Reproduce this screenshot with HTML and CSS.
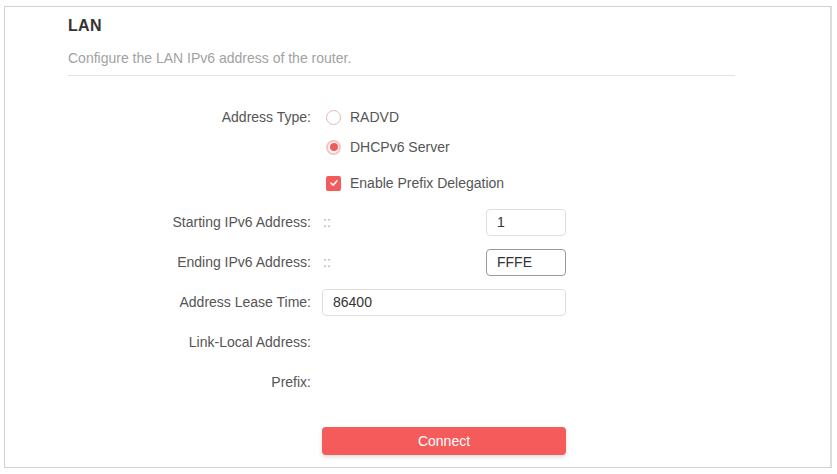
FILE: index.html
```html
<!DOCTYPE html>
<html lang="en">
<head>
    <meta charset="UTF-8">
    <meta name="viewport" content="width=device-width, initial-scale=1.0">
    <title>LAN</title>
    <link rel="stylesheet" href="styles.css">
</head>
<body>
    <div class="frame">
        <div class="header">
            <h2 class="title">LAN</h2>
            <p class="subtitle">Configure the LAN IPv6 address of the router.</p>
        </div>

        <div class="form">
            <div class="row row-top">
                <label class="label">Address Type:</label>
                <div class="options">
                    <div class="option"><span class="radio"></span>RADVD</div>
                    <div class="option"><span class="radio checked"></span>DHCPv6 Server</div>
                </div>
            </div>
            <div class="row row-check">
                <span class="label"></span>
                <div class="option">
                    <span class="checkbox">
                        <svg width="10" height="10" viewBox="0 0 10 10"><path d="M2 5.2 L4.2 7.2 L8 2.8" fill="none" stroke="#fff" stroke-width="1.6" stroke-linecap="round" stroke-linejoin="round"/></svg>
                    </span>Enable Prefix Delegation
                </div>
            </div>
            <div class="row">
                <label class="label">Starting IPv6 Address:</label>
                <div class="field split">
                    <span class="prefix">::</span>
                    <div class="input short">1</div>
                </div>
            </div>
            <div class="row">
                <label class="label">Ending IPv6 Address:</label>
                <div class="field split">
                    <span class="prefix">::</span>
                    <div class="input short active">FFFE</div>
                </div>
            </div>
            <div class="row">
                <label class="label">Address Lease Time:</label>
                <div class="field">
                    <div class="input">86400</div>
                </div>
            </div>
            <div class="row">
                <label class="label">Link-Local Address:</label>
                <div class="field"></div>
            </div>
            <div class="row">
                <label class="label">Prefix:</label>
                <div class="field"></div>
            </div>
            <div class="row row-button">
                <span class="label"></span>
                <button class="btn">Connect</button>
            </div>
            <div class="row row-next">
                <span class="label"></span>
                <div class="btn-next"></div>
            </div>
        </div>
    </div>
</body>
</html>
```

FILE: styles.css
```css
body {
    margin: 0;
    background-color: #fff;
    font-family: "Liberation Sans", Arial, sans-serif;
    font-size: 14px;
    color: #555;
}

.frame {
    margin: 6px 0 0 4px;
    width: 828px;
    height: 462px;
    box-sizing: border-box;
    border: 1px solid #d2d2d2;
    border-right-width: 2px;
    border-right-color: #dcdcdc;
}

.header {
    margin-left: 63px;
    width: 667px;
    padding-top: 10px;
    padding-bottom: 9px;
    border-bottom: 1px solid #e2e2e2;
}

.title {
    margin: 0;
    font-size: 16px;
    line-height: 18px;
    font-weight: bold;
    color: #333;
    letter-spacing: 0.3px;
}

.subtitle {
    margin: 15px 0 0;
    line-height: 16px;
    color: #a2a2a2;
}

.form {
    padding-top: 31px;
}

.row {
    display: flex;
    align-items: center;
    height: 28px;
    margin-top: 12px;
}

.row-top {
    margin-top: 0;
    height: auto;
    align-items: flex-start;
}

.row-check {
    height: 20px;
    margin-top: 16px;
}

.row-check + .row {
    margin-top: 15px;
}

.row-button {
    margin-top: 31px;
}

.row-next {
    margin-top: 14px;
}

.label {
    width: 306px;
    margin-right: 11px;
    text-align: right;
    line-height: 20px;
    white-space: nowrap;
}

.options {
    display: flex;
    flex-direction: column;
    gap: 10px;
}

.option {
    display: flex;
    align-items: center;
    height: 20px;
    padding-left: 4px;
    color: #555;
}

.radio {
    width: 15px;
    height: 15px;
    box-sizing: border-box;
    border: 1px solid #e2b9b9;
    border-radius: 50%;
    margin-right: 9px;
    position: relative;
}

.radio.checked {
    border: 2px solid #f8c2c2;
}

.radio.checked::after {
    content: "";
    position: absolute;
    left: 1.5px;
    top: 1.5px;
    width: 8px;
    height: 8px;
    border-radius: 50%;
    background-color: #f15b5b;
}

.checkbox {
    width: 15px;
    height: 15px;
    border-radius: 2px;
    background-color: #f25c5c;
    margin-right: 9px;
    display: flex;
    align-items: center;
    justify-content: center;
}

.checkbox svg {
    display: block;
}

.field {
    width: 244px;
    display: flex;
    align-items: center;
}

.split {
    justify-content: space-between;
}

.prefix {
    color: #aaa;
    padding-left: 1px;
}

.input {
    width: 100%;
    height: 27px;
    box-sizing: border-box;
    border: 1px solid #dedede;
    border-radius: 4px;
    padding-left: 10px;
    line-height: 25px;
    color: #333;
}

.input.short {
    width: 80px;
}

.input.active {
    border-color: #9a9a9a;
}

.btn {
    width: 244px;
    height: 28px;
    border: none;
    border-radius: 4px;
    background-color: #f65b5b;
    color: #fff;
    font-family: "Liberation Sans", Arial, sans-serif;
    font-size: 14px;
    box-shadow: 0 2px 4px rgba(0,0,0,0.15);
    cursor: pointer;
}

.btn-next {
    width: 244px;
    height: 28px;
    border-radius: 4px;
    background-color: #e8e8e8;
}
```
